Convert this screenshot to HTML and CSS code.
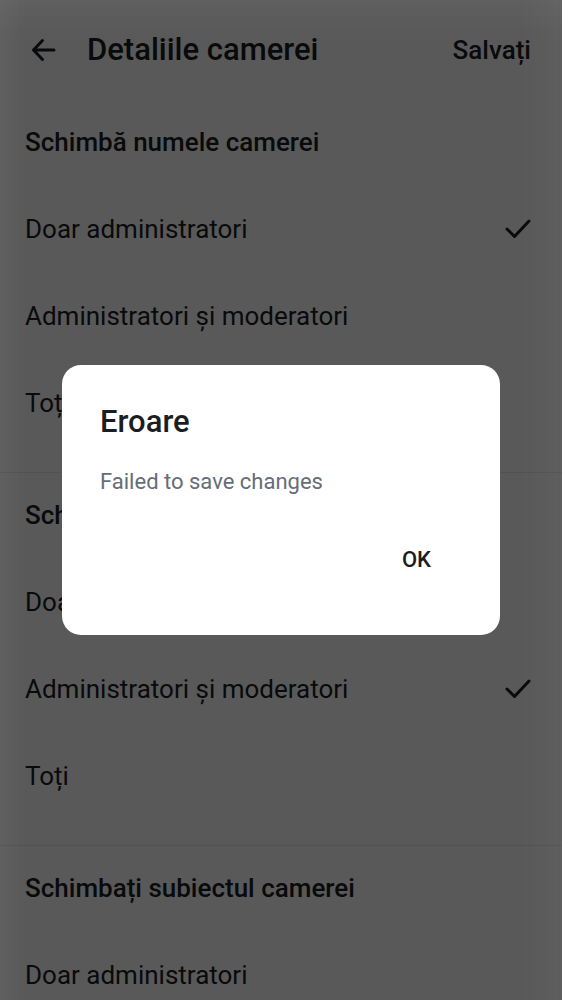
FILE: index.html
```html
<!DOCTYPE html>
<html lang="ro">
<head>
<meta charset="utf-8">
<meta name="viewport" content="width=device-width, initial-scale=1">
<title>Detaliile camerei</title>
<link rel="stylesheet" href="styles.css">
</head>
<body>
<svg class="sprite" aria-hidden="true">
  <symbol id="check" viewBox="0 0 32 32"><path d="M5 16l7.500 7.500L27 8"/></symbol>
</svg>
<main class="screen">
  <header class="top-bar">
    <button class="back" type="button" aria-label="Înapoi">
      <svg class="icon" viewBox="0 0 32 32"><path d="M27 16H6.500M15.500 6.500L6.500 16l9 9.500"/></svg>
    </button>
    <h1 class="title">Detaliile camerei</h1>
    <button class="save" type="button">Salvați</button>
  </header>
  <form class="settings">
    <fieldset class="group">
      <legend class="group-title">Schimbă numele camerei</legend>
      <label class="option"><span>Doar administratori</span><input class="radio" type="radio" name="room-name" checked><svg class="icon check"><use href="#check"/></svg></label>
      <label class="option"><span>Administratori și moderatori</span><input class="radio" type="radio" name="room-name"><svg class="icon check"><use href="#check"/></svg></label>
      <label class="option"><span>Toți</span><input class="radio" type="radio" name="room-name"><svg class="icon check"><use href="#check"/></svg></label>
    </fieldset>
    <fieldset class="group">
      <legend class="group-title">Schimbați avatarul camerei</legend>
      <label class="option"><span>Doar administratori</span><input class="radio" type="radio" name="room-avatar"><svg class="icon check"><use href="#check"/></svg></label>
      <label class="option"><span>Administratori și moderatori</span><input class="radio" type="radio" name="room-avatar" checked><svg class="icon check"><use href="#check"/></svg></label>
      <label class="option"><span>Toți</span><input class="radio" type="radio" name="room-avatar"><svg class="icon check"><use href="#check"/></svg></label>
    </fieldset>
    <fieldset class="group">
      <legend class="group-title">Schimbați subiectul camerei</legend>
      <label class="option"><span>Doar administratori</span><input class="radio" type="radio" name="room-topic"><svg class="icon check"><use href="#check"/></svg></label>
    </fieldset>
  </form>
</main>
<div class="scrim">
  <dialog class="dialog" open aria-labelledby="dialog-title">
    <h2 class="dialog-title" id="dialog-title">Eroare</h2>
    <p class="dialog-text">Failed to save changes</p>
    <div class="dialog-actions"><button class="ok" type="button">OK</button></div>
  </dialog>
</div>
</body>
</html>
```

FILE: styles.css
```css
* {
  box-sizing: border-box;
}

body {
  margin: 0;
  background: #fff;
  color: #1b1d22;
  font-family: Roboto, "Noto Sans", sans-serif;
  font-size: 26px;
  line-height: 32px;
}

button {
  border: 0;
  background: none;
  color: inherit;
  font: inherit;
  font-weight: 500;
}

.sprite {
  display: none;
}

.screen {
  height: 100vh;
  overflow: hidden;
}

.icon {
  display: block;
  width: 32px;
  height: 32px;
  fill: none;
  stroke: currentColor;
  stroke-width: 3;
  stroke-linecap: round;
  stroke-linejoin: round;
}

.top-bar {
  display: flex;
  align-items: center;
  height: 100px;
  padding: 0 31px 0 27px;
}

.back {
  padding: 0;
}

.title {
  flex: 1;
  margin: 0 0 0 28px;
  font-size: 31px;
  font-weight: 500;
  line-height: 40px;
}

.save {
  padding: 0;
}

.group {
  min-width: 0;
  margin: 0;
  padding: 0 28px 26px 25px;
  border: 0;
}

.group + .group {
  border-top: 1px solid #e9ebee;
}

.group-title {
  float: left;
  width: 100%;
  padding: 26px 0 27px;
  font-weight: 500;
}

.option {
  display: flex;
  align-items: center;
  justify-content: space-between;
  clear: both;
  height: 87px;
}

.radio {
  appearance: none;
  width: 0;
  height: 0;
  margin: 0;
}

.check {
  visibility: hidden;
}

.radio:checked + .check {
  visibility: visible;
}

.scrim {
  position: fixed;
  inset: 0;
  display: grid;
  align-items: center;
  padding: 0 62px;
  background:
    linear-gradient(to bottom, rgb(255 255 255 / 4%), transparent 36px),
    linear-gradient(to right, rgb(255 255 255 / 4%), transparent 26px),
    linear-gradient(to left, rgb(255 255 255 / 3%), transparent 40px),
    rgb(0 0 0 / 65%);
}

.dialog {
  position: static;
  width: 100%;
  margin: 0;
  padding: 37px 38px 45px;
  border: 0;
  border-radius: 19px;
  background: #fff;
  color: #1b1d22;
}

.dialog-title {
  margin: 0 0 25px;
  font-size: 31px;
  font-weight: 500;
  line-height: 40px;
}

.dialog-text {
  margin: 0 0 33px;
  color: #656d77;
  font-size: 22px;
  line-height: 30px;
}

.dialog-actions {
  display: flex;
  justify-content: flex-end;
}

.ok {
  height: 60px;
  padding: 0 31px;
  font-size: 22px;
}
```
